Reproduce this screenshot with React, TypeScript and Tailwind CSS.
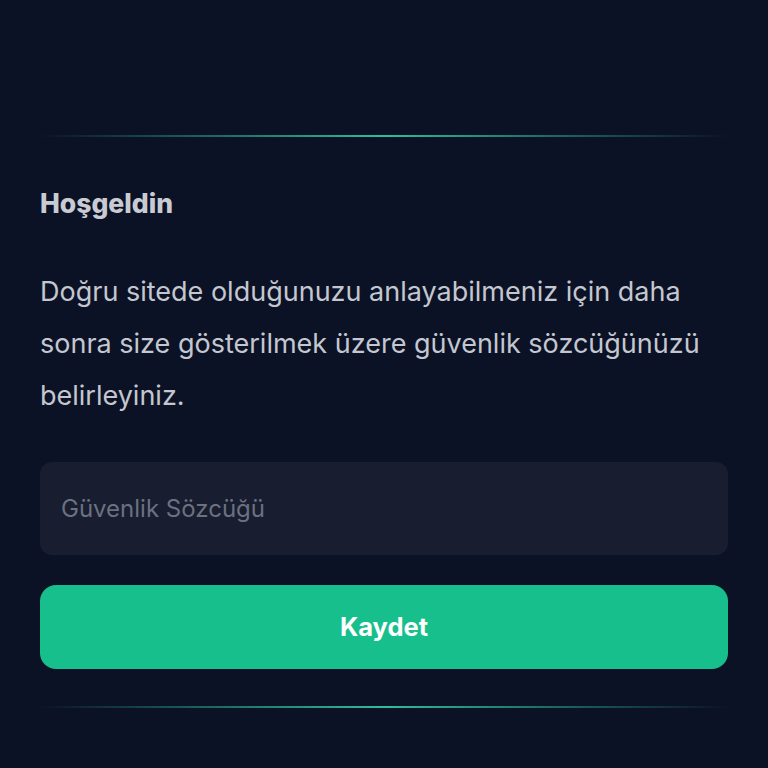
import React, { useState } from "react";

const App: React.FC = () => {
  const [word, setWord] = useState("");

  return (
    <div
      className="min-h-[768px] w-full bg-[#0b1226] px-10 pt-[135px]"
      style={{ fontFamily: "Inter, 'Noto Sans', sans-serif" }}
    >
      {/* top glow line */}
      <div className="h-[2px] w-full bg-gradient-to-r from-transparent via-[#34d1a6] to-transparent opacity-90" />

      <h1 className="mt-[50px] text-[26.5px] leading-[32px] font-extrabold text-[#c9cbd2]">
        Hoşgeldin
      </h1>

      <p className="mt-[47px] text-[27px] leading-[52px] text-[#c4c7cf]">
        Doğru sitede olduğunuzu anlayabilmeniz için daha sonra size
        gösterilmek üzere güvenlik sözcüğünüzü belirleyiniz.
      </p>

      <input
        type="text"
        value={word}
        onChange={(e) => setWord(e.target.value)}
        placeholder="Güvenlik Sözcüğü"
        className="mt-[40px] block h-[93px] w-full rounded-xl bg-[#181d2f] px-[21px] text-[24px] text-[#c4c7cf] placeholder:text-[#6b7180] focus:outline-none"
      />

      <button className="mt-[30px] block h-[84px] w-full rounded-2xl bg-[#17bf8c] text-[25.5px] font-bold text-white">
        Kaydet
      </button>

      {/* bottom glow line */}
      <div className="mt-[37px] h-[2px] w-full bg-gradient-to-r from-transparent via-[#34d1a6] to-transparent opacity-90" />
    </div>
  );
};

export default App;
